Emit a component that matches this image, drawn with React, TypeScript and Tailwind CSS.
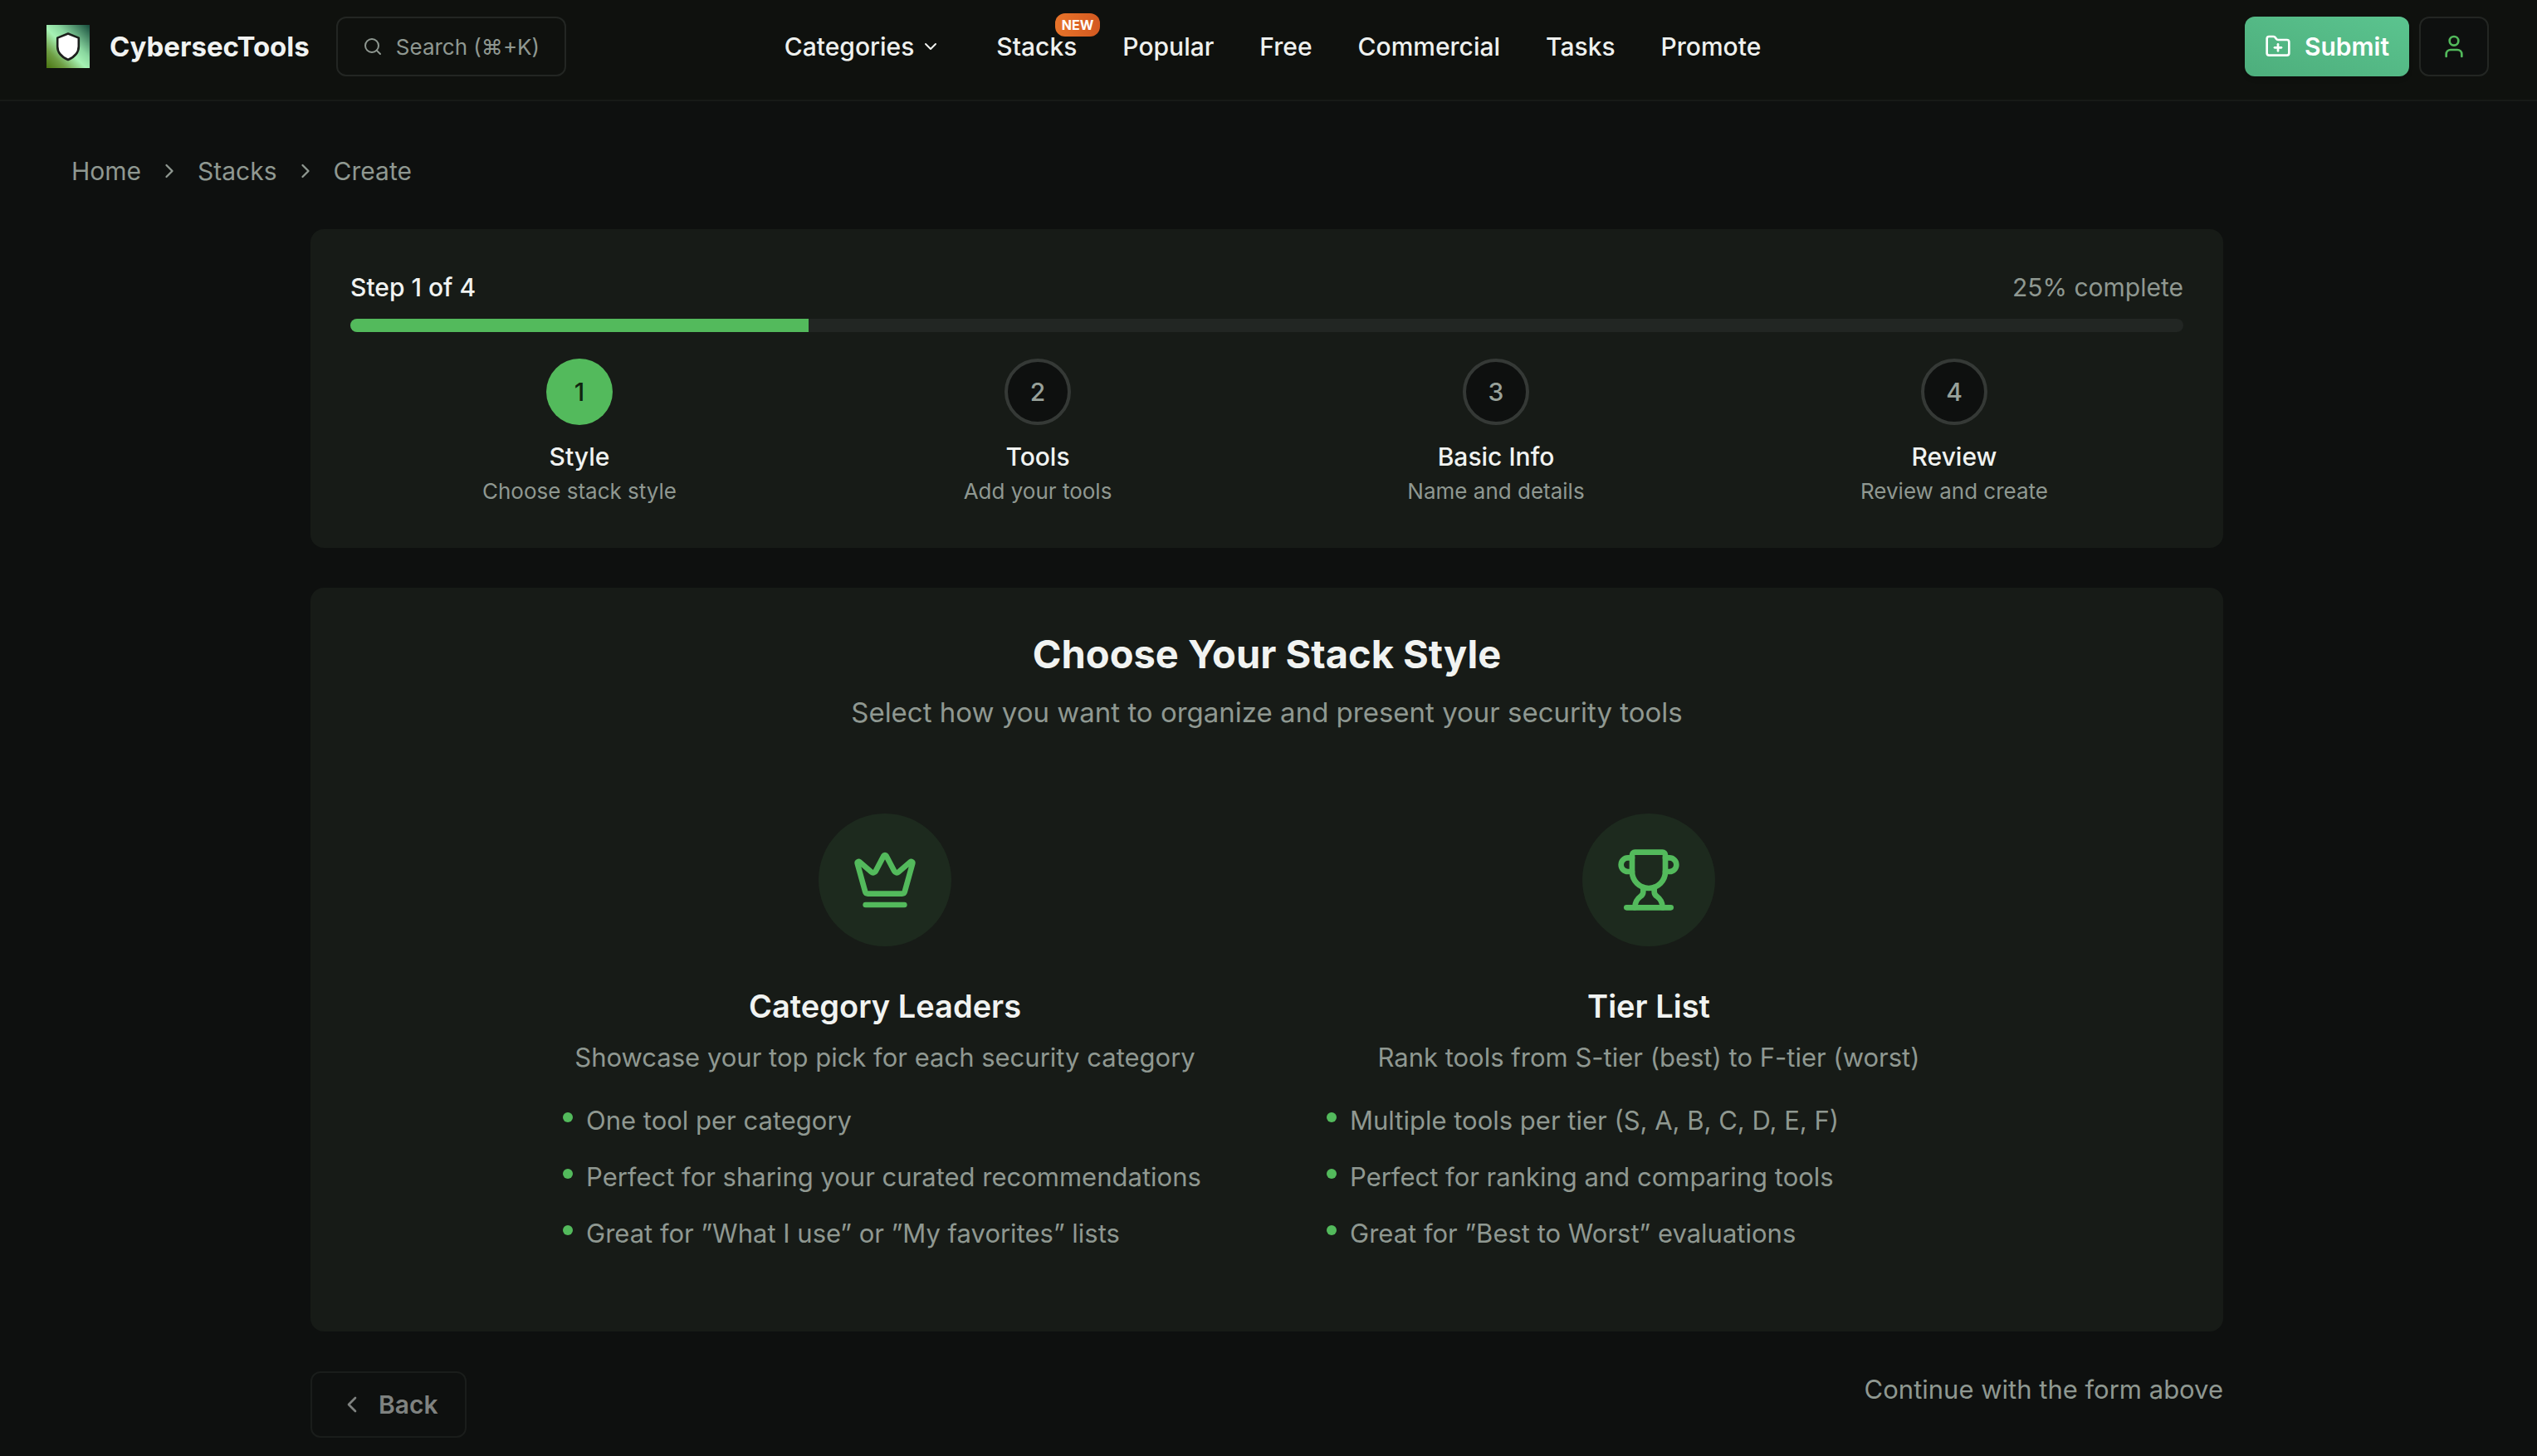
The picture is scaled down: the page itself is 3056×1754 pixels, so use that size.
import { ChevronDown, ChevronLeft, ChevronRight, Crown, FolderPlus, Search, Trophy, User } from 'lucide-react';
import type { LucideIcon } from 'lucide-react';
import clsx from 'clsx';

interface NavItem {
  label: string;
  hasMenu?: boolean;
  badge?: string;
}

interface Step {
  title: string;
  description: string;
}

interface StackStyle {
  id: string;
  icon: LucideIcon;
  title: string;
  description: string;
  features: string[];
}

const navItems: NavItem[] = [
  { label: 'Categories', hasMenu: true },
  { label: 'Stacks', badge: 'NEW' },
  { label: 'Popular' },
  { label: 'Free' },
  { label: 'Commercial' },
  { label: 'Tasks' },
  { label: 'Promote' },
];

const breadcrumbs = ['Home', 'Stacks', 'Create'];

const steps: Step[] = [
  { title: 'Style', description: 'Choose stack style' },
  { title: 'Tools', description: 'Add your tools' },
  { title: 'Basic Info', description: 'Name and details' },
  { title: 'Review', description: 'Review and create' },
];

const stackStyles: StackStyle[] = [
  {
    id: 'leaders',
    icon: Crown,
    title: 'Category Leaders',
    description: 'Showcase your top pick for each security category',
    features: [
      'One tool per category',
      'Perfect for sharing your curated recommendations',
      'Great for ”What I use” or ”My favorites” lists',
    ],
  },
  {
    id: 'tiers',
    icon: Trophy,
    title: 'Tier List',
    description: 'Rank tools from S-tier (best) to F-tier (worst)',
    features: [
      'Multiple tools per tier (S, A, B, C, D, E, F)',
      'Perfect for ranking and comparing tools',
      'Great for ”Best to Worst” evaluations',
    ],
  },
];

/* ------------------------------------------------------------------ */
/*  Header                                                             */
/* ------------------------------------------------------------------ */

function Logo() {
  return (
    <svg viewBox="0 0 52 52" className="size-13 shrink-0" aria-hidden="true">
      <defs>
        <linearGradient id="logo-bg" x1="0" y1="1" x2="1" y2="0">
          <stop offset="0" stopColor="#4a7410" />
          <stop offset="0.22" stopColor="#6f9f45" />
          <stop offset="0.46" stopColor="#a6f2b4" />
          <stop offset="0.62" stopColor="#8ad79f" />
          <stop offset="1" stopColor="#154a3b" />
        </linearGradient>
      </defs>
      <rect width="52" height="52" fill="url(#logo-bg)" />
      <path
        d="M26 10.5 38.8 15.6V26c0 7.2-5 12.6-12.8 16C18.2 38.6 13.2 33.2 13.2 26V15.6Z"
        fill="#fff"
        stroke="#1c1f1c"
        strokeWidth="2.6"
        strokeLinejoin="round"
      />
    </svg>
  );
}

function Header() {
  return (
    <header className="flex h-[122px] items-start border-b-2 border-[#171a17] bg-[#0f110e] pt-5 pr-[58px] pl-14">
      <div className="flex h-18 flex-1 items-center gap-8">
        <a href="#" className="flex items-center gap-6">
          <Logo />
          <span className="text-[33px] leading-11 font-bold text-[#f1f3f1]">CybersecTools</span>
        </a>
        <button
          type="button"
          className="flex h-18 items-center gap-4 rounded-xl border-2 border-[#232623] px-[30px] text-[26px] text-[#8f9891]"
        >
          <Search className="size-6" />
          Search (⌘+K)
        </button>
      </div>

      <nav className="flex h-18 items-center gap-[55px] pl-3 text-[30px] leading-11 font-medium text-[#eff1ef]">
        {navItems.map((item) =>
          item.hasMenu ? (
            <button key={item.label} type="button" className="mr-3 flex items-center gap-2">
              {item.label}
              <ChevronDown className="size-6" />
            </button>
          ) : (
            <a key={item.label} href="#" className="relative">
              {item.label}
              {item.badge && (
                <span className="absolute -top-[18px] -right-7 flex h-7 items-center rounded-xl bg-linear-to-r from-[#e8742a] to-[#d35920] px-2 text-base font-bold text-white">
                  {item.badge}
                </span>
              )}
            </a>
          ),
        )}
      </nav>

      <div className="flex h-18 flex-1 items-center justify-end gap-3">
        <button
          type="button"
          className="flex h-18 items-center gap-4 rounded-xl bg-linear-to-tr from-[#4dae7c] to-[#5bc48f] px-6 text-[30px] font-semibold text-white shadow-md"
        >
          <FolderPlus className="size-8" />
          Submit
        </button>
        <button
          type="button"
          aria-label="Account"
          className="flex h-18 w-21 items-center justify-center rounded-xl border-2 border-[#232623] bg-[#0e100f] text-[#52b95b]"
        >
          <User className="size-8" />
        </button>
      </div>
    </header>
  );
}

function Breadcrumbs() {
  return (
    <nav aria-label="Breadcrumb" className="px-[86px]">
      <ol className="flex items-center gap-5 text-[30px] leading-11 text-[#8f9891]">
        {breadcrumbs.map((crumb, i) => (
          <li key={crumb} className="flex items-center gap-5">
            {i > 0 && <ChevronRight className="size-7" />}
            <a href="#">{crumb}</a>
          </li>
        ))}
      </ol>
    </nav>
  );
}

/* ------------------------------------------------------------------ */
/*  Wizard                                                             */
/* ------------------------------------------------------------------ */

function StepProgress({ current }: { current: number }) {
  const percent = Math.round((current / steps.length) * 100);

  return (
    <section className="rounded-2xl bg-[#171b17] p-12">
      <div className="mb-4 flex items-center justify-between leading-11">
        <span className="text-[30px] font-medium text-[#f1f3f1]">
          Step {current} of {steps.length}
        </span>
        <span className="text-[30px] text-[#8f9891]">{percent}% complete</span>
      </div>
      <div className="mb-8 h-4 overflow-hidden rounded-full bg-[#222623]">
        <div className="h-full bg-[#53ba5c]" style={{ width: `${percent}%` }} />
      </div>
      <ol className="grid grid-cols-4">
        {steps.map((step, i) => (
          <li key={step.title} className="flex flex-col items-center text-center">
            <div
              className={clsx(
                'mb-4 flex size-20 items-center justify-center rounded-full text-[30px] font-medium',
                i + 1 === current
                  ? 'bg-[#53ba5c] text-[#10240f]'
                  : 'border-4 border-[#353936] bg-[#0e100f] text-[#98a19a]',
              )}
            >
              {i + 1}
            </div>
            <p className="text-[30px] leading-11 font-medium text-[#f1f3f1]">{step.title}</p>
            <p className="text-[26px] leading-10 text-[#8f9891]">{step.description}</p>
          </li>
        ))}
      </ol>
    </section>
  );
}

function StyleOption({ option }: { option: StackStyle }) {
  const Icon = option.icon;

  return (
    <div className="p-12">
      <div className="mx-auto mb-12 flex size-40 items-center justify-center rounded-full bg-[#1d2a1e]">
        <Icon className="size-20 text-[#53ba5c]" />
      </div>
      <h3 className="mb-4 text-center text-[38px] leading-12 font-semibold text-[#f1f3f1]">{option.title}</h3>
      <p className="mb-8 text-center text-[31px] leading-11 text-[#8f9891]">{option.description}</p>
      <ul className="space-y-6">
        {option.features.map((feature) => (
          <li key={feature} className="flex items-start gap-4 text-[31px] leading-11 text-[#8f9891]">
            <span className="mt-3 size-3 shrink-0 rounded-full bg-[#53ba5c]" />
            {feature}
          </li>
        ))}
      </ul>
    </div>
  );
}

function StylePicker() {
  return (
    <section className="rounded-2xl bg-[#171b17] p-12">
      <h2 className="mb-4 text-center text-[47px] leading-16 font-bold text-[#f1f3f1]">Choose Your Stack Style</h2>
      <p className="mb-13 text-center text-[33px] leading-11 text-[#8f9891]">
        Select how you want to organize and present your security tools
      </p>
      <div className="mx-auto grid max-w-[1792px] grid-cols-2 gap-12">
        {stackStyles.map((option) => (
          <StyleOption key={option.id} option={option} />
        ))}
      </div>
    </section>
  );
}

export default function App() {
  return (
    <div className="min-h-screen bg-[#0e100f] font-['Inter',sans-serif]">
      <Header />
      <main className="pt-[62px] pr-1">
        <Breadcrumbs />
        <div className="mx-auto mt-12 flex max-w-[2304px] flex-col gap-12">
          <StepProgress current={1} />
          <StylePicker />
          <div className="flex items-start justify-between">
            <button
              type="button"
              disabled
              className="flex h-20 items-center gap-4 rounded-xl border-2 border-[#1a1d1b] px-8 text-[30px] font-semibold text-[#7f8280]"
            >
              <ChevronLeft className="size-8" />
              Back
            </button>
            <p className="text-[31px] leading-11 text-[#8f9891]">Continue with the form above</p>
          </div>
        </div>
      </main>
    </div>
  );
}
